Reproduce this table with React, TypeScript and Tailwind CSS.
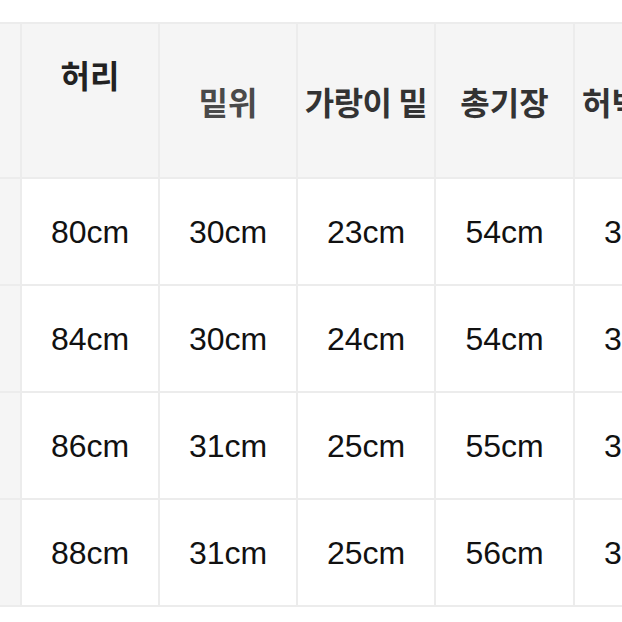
import React from "react";

const rows = [
  ["80cm", "30cm", "23cm", "54cm", "34cm"],
  ["84cm", "30cm", "24cm", "54cm", "35cm"],
  ["86cm", "31cm", "25cm", "55cm", "35cm"],
  ["88cm", "31cm", "25cm", "56cm", "36cm"],
];

const head =
  "bg-[#f5f5f5] flex justify-center text-[32px] font-bold leading-none whitespace-nowrap font-['Noto_Sans_CJK_KR',sans-serif]";

export default function App() {
  return (
    <div className="w-[622px] h-[622px] overflow-hidden bg-white pt-[22px]">
      <div className="w-[720px] bg-[#ececec] py-[2px]">
        <div className="grid grid-cols-[20px_136px_136px_136px_137px_136px] grid-rows-[153px_105px_105px_105px_105px] gap-[2px]">
          <div className="bg-[#f5f5f5]" />
          <div className={`${head} pt-[34px] text-[#222]`}>허리</div>
          <div className={`${head} items-center text-[#4a4a4a]`}>밑위</div>
          <div className={`${head} items-center text-[#333] tracking-[-0.5px]`}>가랑이 밑</div>
          <div className={`${head} items-center text-[#333]`}>총기장</div>
          <div className={`${head} items-center text-[#333] justify-start pl-[7px]`}>허벅지 단면</div>
          {rows.map((r, i) => (
            <React.Fragment key={i}>
              <div className="bg-[#f5f5f5]" />
              {r.map((v, j) => (
                <div
                  key={j}
                  className="bg-white flex justify-center items-center text-[32px] text-[#111] leading-none font-['Liberation_Sans',Arial,sans-serif]"
                >
                  {v}
                </div>
              ))}
            </React.Fragment>
          ))}
        </div>
      </div>
    </div>
  );
}
